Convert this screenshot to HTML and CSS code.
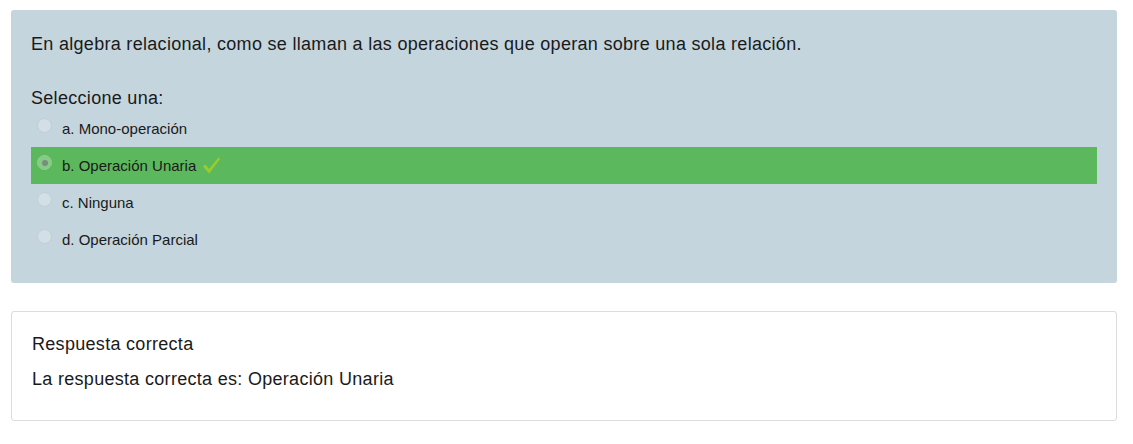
FILE: index.html
```html
<!DOCTYPE html>
<html lang="es">
<head>
<meta charset="utf-8">
<link rel="stylesheet" href="styles.css">
</head>
<body>
<div class="page">
  <div class="question">
    <p class="qtext">En algebra relacional, como se llaman a las operaciones que operan sobre una sola relación.</p>
    <div class="prompt">Seleccione una:</div>
    <div class="answers">
      <div class="opt"><span class="radio"></span><span class="label">a. Mono-operación</span></div>
      <div class="opt correct"><span class="radio checked"></span><span class="label">b. Operación Unaria</span>
        <svg class="tick" width="19" height="19" viewBox="0 0 19 19"><path d="M1 10.5 L3.5 8.5 L7 13 L16.5 1.5 L18 3 L7.2 17.5 Z" fill="#9acd2c"/></svg>
      </div>
      <div class="opt"><span class="radio"></span><span class="label">c. Ninguna</span></div>
      <div class="opt"><span class="radio"></span><span class="label">d. Operación Parcial</span></div>
    </div>
  </div>
  <div class="feedback">
    <div class="fb-line">Respuesta correcta</div>
    <div class="fb-line">La respuesta correcta es: Operación Unaria</div>
  </div>
</div>
</body>
</html>
```
FILE: styles.css
```css
html, body {
  margin: 0;
  padding: 0;
  background: #fff;
}
body {
  font-family: "Liberation Sans", Arial, sans-serif;
  color: #1a1a1a;
}
.page {
  padding: 10px 16px 0 11px;
}
.question {
  background: #c4d5de;
  border-radius: 3px;
  padding: 23px 20px 17px 20px;
  height: 273px;
  box-sizing: border-box;
}
.qtext {
  margin: 0;
  font-size: 18px;
  line-height: 22px;
  letter-spacing: 0.3px;
}
.prompt {
  margin-top: 32px;
  font-size: 18px;
  line-height: 22px;
  letter-spacing: 0.3px;
}
.answers {
  margin-top: 1px;
}
.opt {
  display: flex;
  align-items: center;
  height: 37px;
  padding-left: 6px;
  font-size: 15px;
}
.opt.correct {
  background: #5cb85c;
}
.radio {
  width: 15px;
  height: 15px;
  border-radius: 50%;
  border: 1px solid #c2cdd3;
  background: rgba(255,255,255,0.25);
  box-sizing: border-box;
  margin-right: 10px;
  margin-top: -6px;
  position: relative;
}
.correct .radio {
  border-color: #8fcf8f;
  background: rgba(255,255,255,0.25);
}
.radio.checked::after {
  content: "";
  position: absolute;
  left: 3.5px;
  top: 3.5px;
  width: 6px;
  height: 6px;
  border-radius: 50%;
  background: #7a8c7a;
}
.label {
  line-height: 18px;
}
.tick {
  margin-left: 6px;
}
.feedback {
  margin-top: 28px;
  border: 1px solid #dcdcdc;
  border-radius: 3px;
  padding: 21px 20px 0 20px;
  height: 110px;
  box-sizing: border-box;
}
.fb-line {
  font-size: 18px;
  line-height: 22px;
  letter-spacing: 0.3px;
  margin-bottom: 13px;
}
```
